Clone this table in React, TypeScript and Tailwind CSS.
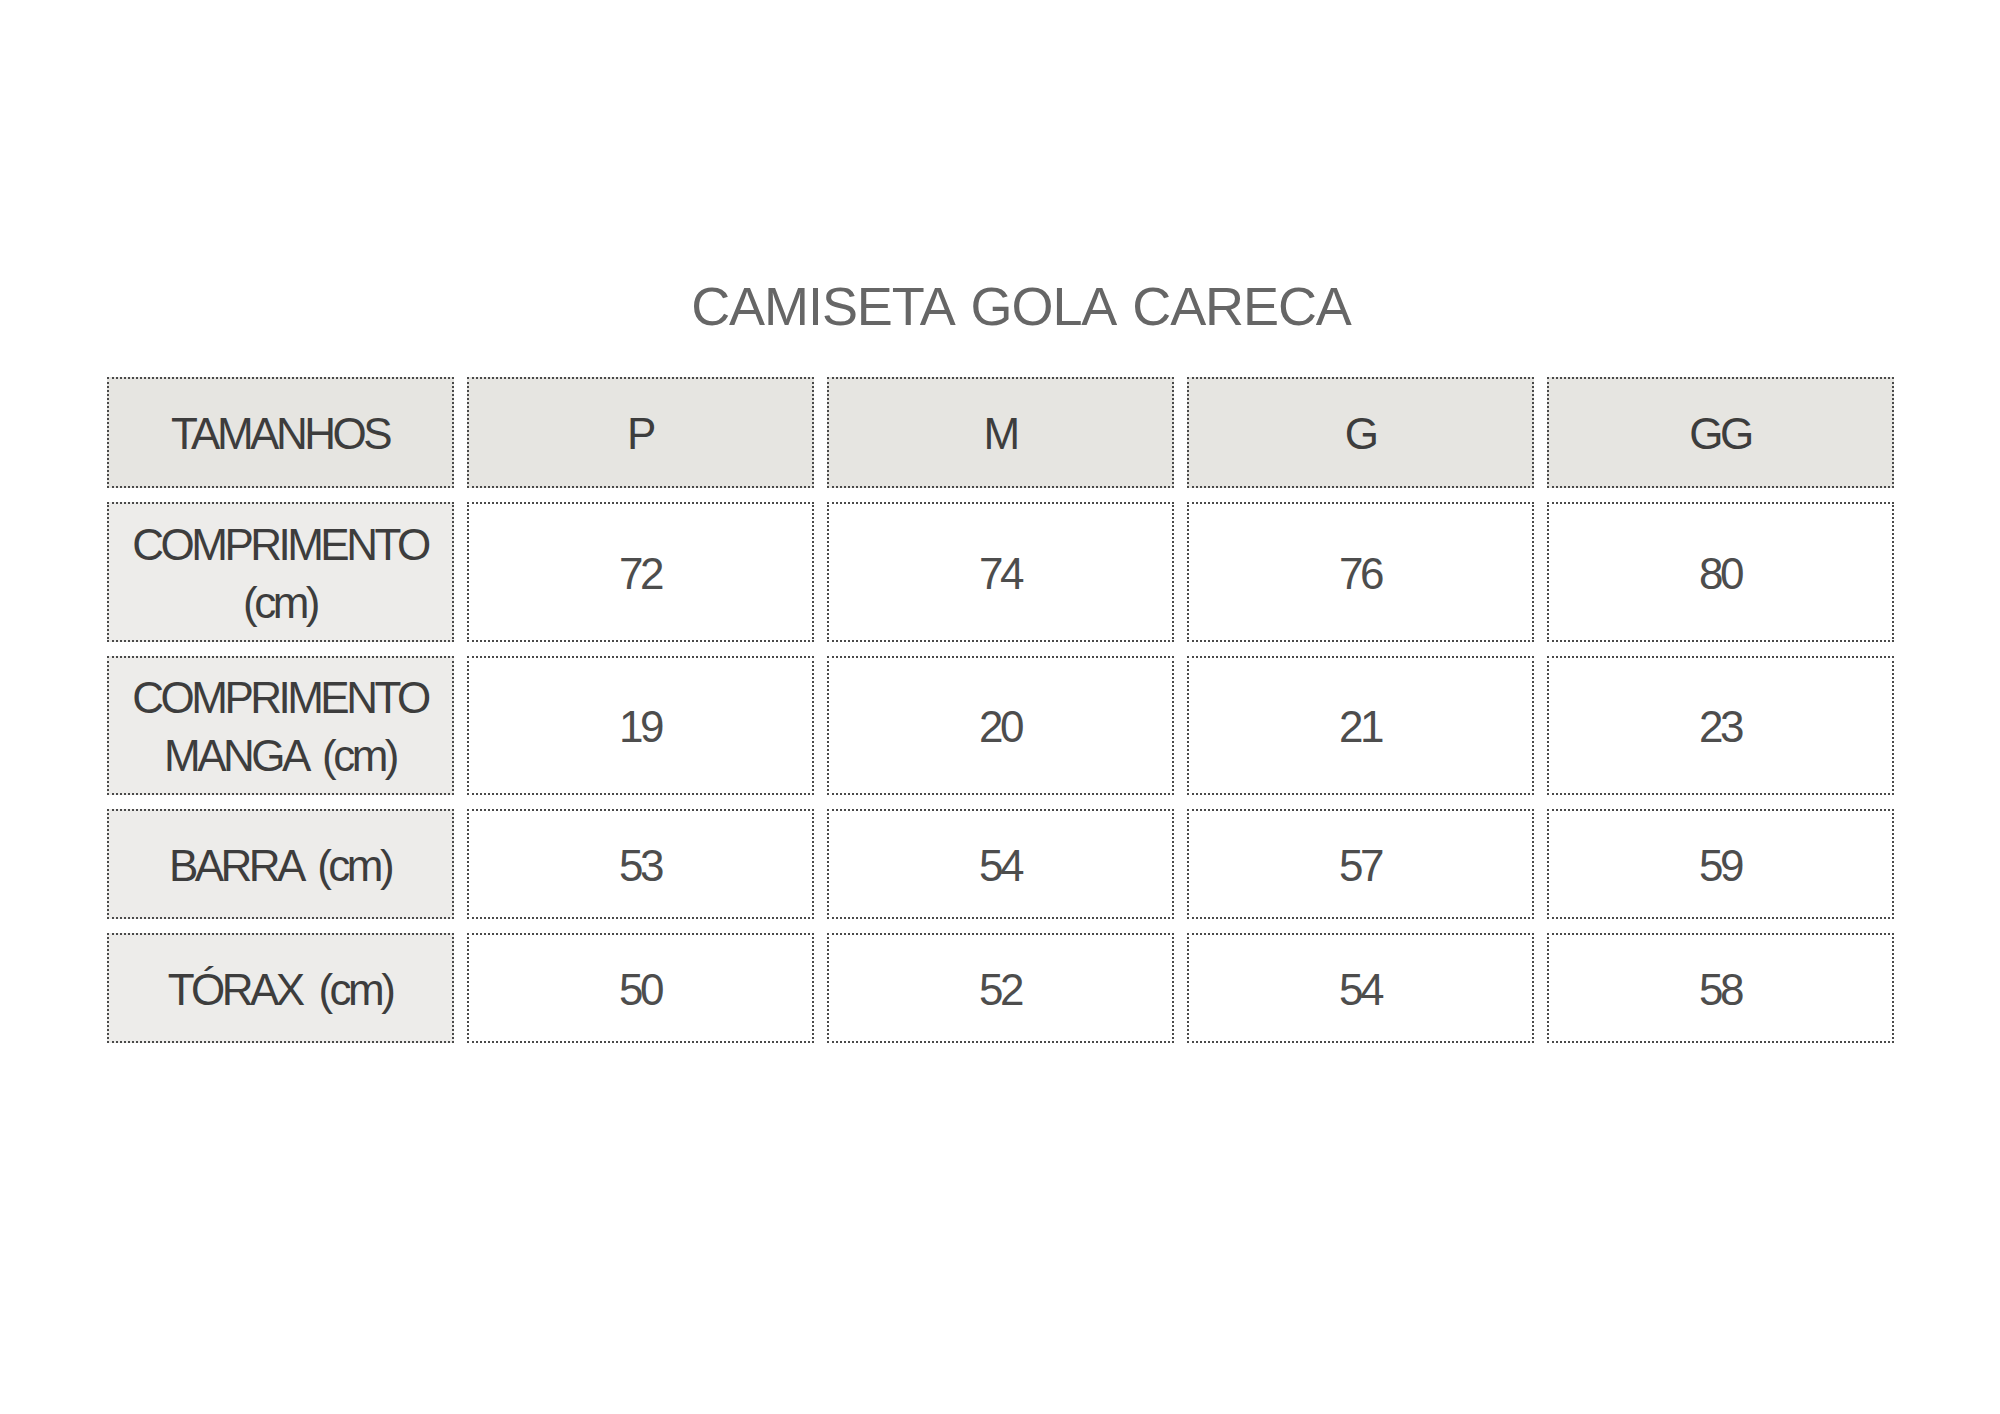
const SIZES = ["P", "M", "G", "GG"] as const;

const ROWS: { label: string[]; values: number[]; h: string }[] = [
  { label: ["COMPRIMENTO", "(cm)"], values: [72, 74, 76, 80], h: "h-[140px]" },
  { label: ["COMPRIMENTO", "MANGA (cm)"], values: [19, 20, 21, 23], h: "h-[139px]" },
  { label: ["BARRA (cm)"], values: [53, 54, 57, 59], h: "h-[110px]" },
  { label: ["TÓRAX (cm)"], values: [50, 52, 54, 58], h: "h-[110px]" },
];

function Cell({
  children,
  bg,
  h,
  color = "text-[#3d3d3d]",
}: {
  children: React.ReactNode;
  bg: string;
  h: string;
  color?: string;
}) {
  return (
    <div
      className={`flex flex-col items-center justify-center border-2 border-dotted border-[#4a4a4a] pt-[3px] text-center text-[44px] leading-[58px] tracking-[-0.08em] [word-spacing:8px] ${bg} ${h} ${color}`}
    >
      {children}
    </div>
  );
}

export default function App() {
  return (
    <div
      className="h-[1414px] w-[2000px] bg-white pt-[279px]"
      style={{ fontFamily: '"Liberation Sans", Arial, sans-serif' }}
    >
      {/* title */}
      <h1 className="pl-[42px] text-center text-[54px] leading-none font-normal tracking-[-0.02em] text-[#666666] [word-spacing:5px]">
        CAMISETA GOLA CARECA
      </h1>

      {/* size table */}
      <div className="mx-auto mt-[44px] grid w-[1787px] grid-cols-5 gap-x-[13px] gap-y-[14px]">
        <Cell bg="bg-[#e6e5e1]" h="h-[111px]">
          TAMANHOS
        </Cell>
        {SIZES.map((s) => (
          <Cell key={s} bg="bg-[#e6e5e1]" h="h-[111px]">
            {s}
          </Cell>
        ))}

        {ROWS.map((row) => (
          <>
            <Cell key={row.label.join()} bg="bg-[#edecea]" h={row.h}>
              {row.label.map((l) => (
                <span key={l}>{l}</span>
              ))}
            </Cell>
            {row.values.map((v, i) => (
              <Cell key={i} bg="bg-white" h={row.h} color="text-[#4d4d4d]">
                {v}
              </Cell>
            ))}
          </>
        ))}
      </div>
    </div>
  );
}
